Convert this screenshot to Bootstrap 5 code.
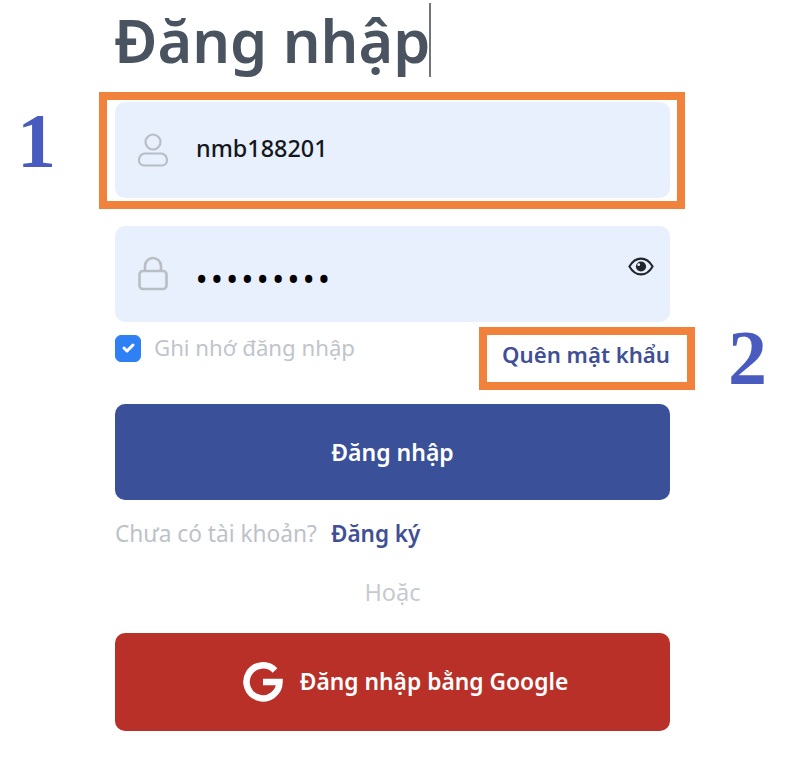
<!DOCTYPE html>
<html lang="vi">
<head>
<meta charset="utf-8">
<title>Đăng nhập</title>
<link rel="stylesheet" href="https://cdn.jsdelivr.net/npm/bootstrap@5.3.0/dist/css/bootstrap.min.css">
<style>
html,body{height:100%;background:#fff;overflow:hidden}
body{font-family:"Noto Sans","Open Sans",sans-serif}
.stage{position:relative;width:786px;height:760px;padding:3px 116px 0 115px}
.login-title{font-family:"Noto Sans",sans-serif;font-weight:600;font-size:59.4px;line-height:74px;color:#4a5360;margin:0 0 25px -1px;display:flex}
.caret-line{display:inline-block;width:2px;height:74px;background:#70757c;margin-left:-1px}
.field-box{height:96px;background:#e8f0fd;border-radius:10px;padding:0 16px 0 22px;gap:12px}
.field-box + .field-box{margin-top:28px}
.field-input{background:transparent!important;border:0;box-shadow:none!important;padding:0 0 2px 15px;font-size:23.4px;font-weight:500;color:#14171c;font-family:"Noto Sans",sans-serif}
.pass-input{font-size:30px;letter-spacing:4px;color:#000;padding:8px 0 0 15px}
.ico-gray{color:#b9bec4;flex:0 0 auto}
.eye-ico{flex:0 0 auto;margin-bottom:15px}
.options-row{height:82px}
.remember-row{margin:11px 0 0;padding:0;gap:13px;min-height:0}
.remember-row .form-check-input{float:none;margin:0;width:26px;height:27px;border-radius:6px;background-color:#2f80f5;border-color:#2f80f5;background-size:20px}
.remember-row .form-check-label{font-size:22.2px;color:#c0c5cb;line-height:30px}
.forgot-link{font-size:22.2px;font-weight:600;color:#3f5096;text-decoration:none;margin-top:18px;line-height:30px}
.main-btn{border-radius:10px;border:0;font-size:23px;font-weight:600;color:#fff;width:100%;padding:0}
.btn-blue{background:#3a5199;height:96px}
.btn-red{background:#b93028;height:98px;padding-left:25px;font-size:22.8px}
.signup-line{font-size:22.7px;color:#bcc2c9;margin:19px 0 0;line-height:30px;gap:14px}
.signup-line a{color:#3f5096;font-weight:600;text-decoration:none;font-size:22.5px}
.or-line{font-size:23.5px;color:#c6cacf;margin:28px 0 26px;line-height:30px}
.callout-mark{position:absolute;border:8px solid #f0823c}
.callout-one{left:99px;top:92px;width:586px;height:117px}
.callout-two{left:479px;top:327px;width:216px;height:63px}
.callout-num{position:absolute;font-family:"Liberation Serif",serif;font-weight:700;font-size:78px;line-height:78px;color:#4a5bbf}
.num-one{left:17px;top:102px}
.num-two{left:728px;top:319px}
</style>
</head>
<body>
<div class="stage">
  <h1 class="login-title">Đăng nhập<span class="caret-line"></span></h1>
  <form>
    <div class="field-box d-flex align-items-center">
      <svg class="ico-gray" width="32" height="34" viewBox="0 0 32 34" fill="none" stroke="currentColor" stroke-width="2.200"><circle cx="16" cy="9" r="7.500"/><path d="M8 20.500h16c3.500 0 6 3 6 6.500 0 3-2 5.500-5 5.500H7c-3 0-5-2.500-5-5.500 0-3.500 2.500-6.500 6-6.500Z"/></svg>
      <input class="form-control field-input" type="text" value="nmb188201" readonly>
    </div>
    <div class="field-box d-flex align-items-center">
      <svg class="ico-gray" width="32" height="36" viewBox="0 0 32 36" fill="none" stroke="currentColor" stroke-width="2.600"><path d="M8 15V10a8 8 0 0 1 16 0v5"/><rect x="2.500" y="15" width="27" height="18" rx="3.500"/></svg>
      <input class="form-control field-input pass-input" type="password" value="123456789" readonly>
      <svg class="eye-ico" width="26" height="19" viewBox="0 0 28 20"><path d="M1.500 10C5 4 9 1.500 14 1.500S23 4 26.500 10C23 16 19 18.500 14 18.500S5 16 1.500 10Z" fill="none" stroke="#22262b" stroke-width="2.200"/><circle cx="14" cy="10" r="5.500" fill="#22262b"/><circle cx="11.500" cy="8" r="1.500" fill="#e8f0fd"/></svg>
    </div>
    <div class="options-row d-flex justify-content-between align-items-start">
      <div class="form-check remember-row d-flex align-items-center">
        <input class="form-check-input" type="checkbox" id="remember" checked>
        <label class="form-check-label" for="remember">Ghi nhớ đăng nhập</label>
      </div>
      <a class="forgot-link" href="#">Quên mật khẩu</a>
    </div>
    <button type="button" class="btn main-btn btn-blue">Đăng nhập</button>
    <p class="signup-line d-flex">Chưa có tài khoản? <a href="#">Đăng ký</a></p>
    <p class="or-line text-center">Hoặc</p>
    <button type="button" class="btn main-btn btn-red d-flex align-items-center justify-content-center gap-3">
      <svg width="42" height="42" viewBox="0 0 42 42" fill="none" stroke="#fff" stroke-width="6.500"><path d="M33 9.500A16.500 16.500 0 1 0 37.500 21H21"/></svg>
      <span>Đăng nhập bằng Google</span>
    </button>
  </form>
  <div class="callout-mark callout-one"></div>
  <div class="callout-mark callout-two"></div>
  <div class="callout-num num-one">1</div>
  <div class="callout-num num-two">2</div>
</div>
<script src="https://cdn.jsdelivr.net/npm/bootstrap@5.3.0/dist/js/bootstrap.bundle.min.js"></script>
</body>
</html>
